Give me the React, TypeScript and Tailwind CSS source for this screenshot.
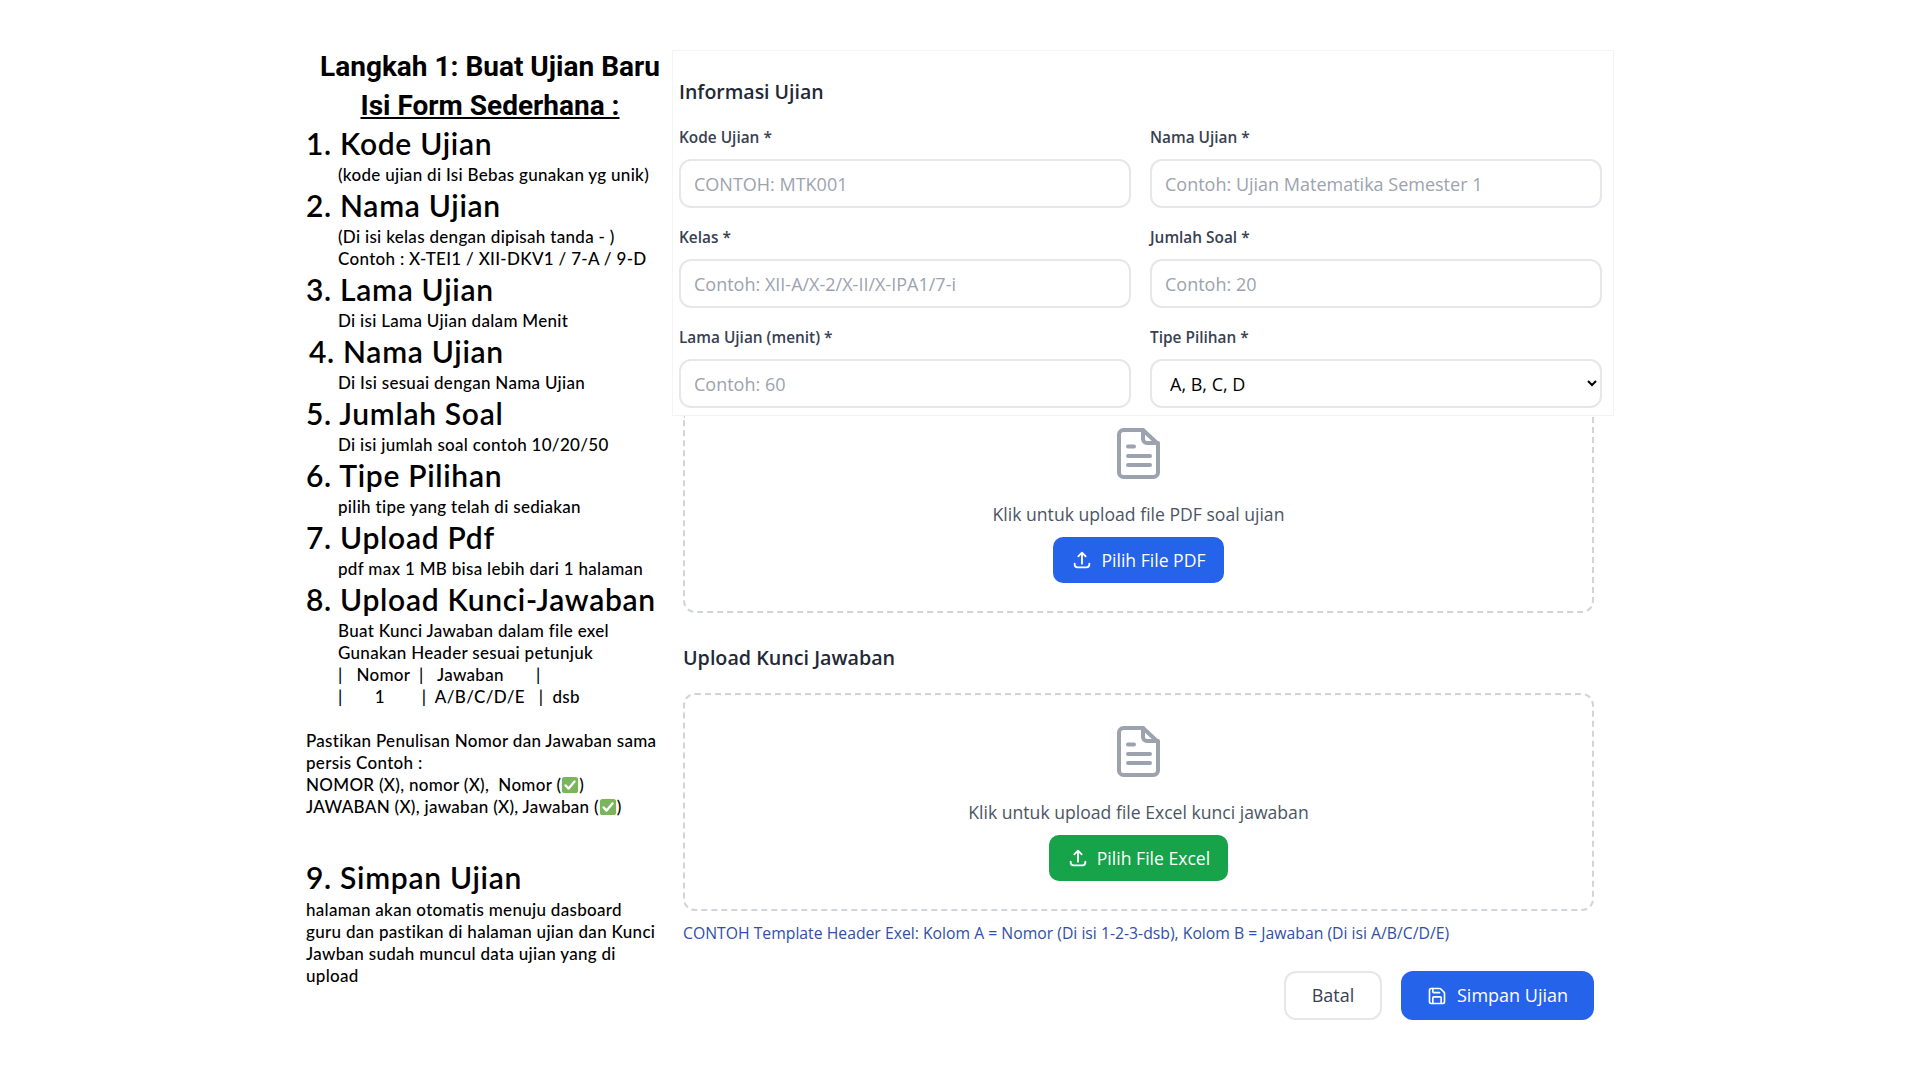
import { Save } from "lucide-react";
import { HiOutlineUpload } from "react-icons/hi";

function Check() {
  return (
    <svg viewBox="0 0 20 20" className="inline-block w-[18px] h-[18px] align-[-3px]">
      <rect x="1" y="1" width="18" height="18" rx="3" fill="#7ab55c" />
      <path d="M5 10.5l3.5 3.5L15 6" fill="none" stroke="#fff" strokeWidth="2.6" strokeLinecap="round" strokeLinejoin="round" />
    </svg>
  );
}

function DocIcon() {
  return (
    <svg viewBox="0 0 43 51" className="w-[43px] h-[51px] text-[#9ca3af]" fill="none" stroke="currentColor" strokeWidth="4" strokeLinecap="round" strokeLinejoin="round">
      <path d="M6.5 2H26L41 16V44.5a4.5 4.5 0 0 1-4.5 4.5H6.5A4.5 4.5 0 0 1 2 44.500V6.500A4.500 4.500 0 0 1 6.500 2z" />
      <path d="M26 2V11a4 4 0 0 0 4 4H41" />
      <path d="M11 18.500H17M11 28H33M11 37H33" />
    </svg>
  );
}

function Step({ title, lines, indent = "" }: { title: string; lines: string[]; indent?: string }) {
  return (
    <div className="mb-[4px]">
      <h3 className={`text-[30px] leading-[32px] font-semibold -mt-[1px] mb-[5px] whitespace-pre tracking-[0.7px] ${indent}`}>{title}</h3>
      {lines.map((line) => (
        <p key={line} className="pl-[32px] text-[17px] leading-[22px] font-medium whitespace-pre tracking-[0.3px]">
          {line}
        </p>
      ))}
    </div>
  );
}

function Field({ label, placeholder }: { label: string; placeholder: string }) {
  return (
    <div>
      <label className="block text-[15.4px] leading-[22px] font-semibold text-[#374151] mb-[10px]">{label}</label>
      <input
        placeholder={placeholder}
        className="w-full h-[49px] px-[13px] text-[18px] border-2 border-[#e5e7eb] rounded-[12px] bg-white placeholder:text-[#9ca3af]"
      />
    </div>
  );
}

function Upload({ label, button, color, className }: { label: string; button: string; color: string; className: string }) {
  return (
    <div className={`border-2 border-dashed border-[#d1d5db] flex flex-col items-center ${className}`}>
      <DocIcon />
      <p className="text-[17.6px] leading-[26px] text-[#4b5563] mt-[22px]">{label}</p>
      <button className={`mt-[10px] h-[46px] px-[18px] rounded-[10px] text-white text-[17.6px] font-medium flex items-center gap-[8px] ${color}`}>
        <HiOutlineUpload className="w-[22px] h-[22px]" />
        {button}
      </button>
    </div>
  );
}

export default function App() {
  return (
    <div className="min-h-[1080px] bg-white flex pl-[306px] pt-[50px] text-black font-['Open_Sans',sans-serif]">
      {/* left instructions */}
      <div className="w-[366px] font-['Lato',sans-serif]">
        <div className="text-center font-['Roboto',sans-serif] font-bold text-[28px] leading-[39px] -mr-[2px]">
          <h1 className="mt-[-3px]">Langkah 1: Buat Ujian Baru</h1>
          <h2 className="underline">Isi Form Sederhana :</h2>
        </div>
        <div className="mt-[3px]">
          <Step title="1. Kode Ujian" lines={["(kode ujian di Isi Bebas gunakan yg unik)"]} />
          <Step title="2. Nama Ujian" lines={["(Di isi kelas dengan dipisah tanda - )", "Contoh : X-TEI1 / XII-DKV1 / 7-A / 9-D"]} />
          <Step title="3. Lama Ujian" lines={["Di isi Lama Ujian dalam Menit"]} />
          <Step title="4. Nama Ujian" indent="pl-[3px]" lines={["Di Isi sesuai dengan Nama Ujian"]} />
          <Step title="5. Jumlah Soal" lines={["Di isi jumlah soal contoh 10/20/50"]} />
          <Step title="6. Tipe Pilihan" lines={["pilih tipe yang telah di sediakan"]} />
          <Step title="7. Upload Pdf" lines={["pdf max 1 MB bisa lebih dari 1 halaman"]} />
          <Step
            title="8. Upload Kunci-Jawaban"
            lines={["Buat Kunci Jawaban dalam file exel", "Gunakan Header sesuai petunjuk", "|   Nomor  |   Jawaban       |", "|       1        |  A/B/C/D/E   |  dsb"]}
          />
        </div>
        <div className="mt-[22px] text-[17px] leading-[22px] font-medium tracking-[0.3px]">
          <p>Pastikan Penulisan Nomor dan Jawaban sama persis Contoh :</p>
          <p className="whitespace-pre">
            NOMOR (X), nomor (X),  Nomor (<Check />)
          </p>
          <p>
            JAWABAN (X), jawaban (X), Jawaban (<Check />)
          </p>
        </div>
        <div className="mt-[43px]">
          <h3 className="text-[30px] leading-[32px] font-semibold mb-[6px] tracking-[0.7px]">9. Simpan Ujian</h3>
          <p className="text-[17px] leading-[22px] font-medium pr-[16px] tracking-[0.3px]">
            halaman akan otomatis menuju dasboard guru dan pastikan di halaman ujian dan Kunci Jawban sudah muncul data ujian yang di upload
          </p>
        </div>
      </div>

      {/* right form */}
      <div className="w-[942px]">
        <section className="h-[366px] border border-[#f3f4f6] pt-[27px] pl-[6px] pr-[11px]">
          <h2 className="text-[19.5px] leading-[28px] font-semibold text-[#1f2937] mb-[21px]">Informasi Ujian</h2>
          <div className="grid grid-cols-2 gap-x-[19px] gap-y-[19px]">
            <Field label="Kode Ujian *" placeholder="CONTOH: MTK001" />
            <Field label="Nama Ujian *" placeholder="Contoh: Ujian Matematika Semester 1" />
            <Field label="Kelas *" placeholder="Contoh: XII-A/X-2/X-II/X-IPA1/7-i" />
            <Field label="Jumlah Soal *" placeholder="Contoh: 20" />
            <Field label="Lama Ujian (menit) *" placeholder="Contoh: 60" />
            <div>
              <label className="block text-[15.4px] leading-[22px] font-semibold text-[#374151] mb-[10px]">Tipe Pilihan *</label>
              <select className="w-full h-[49px] px-[14px] text-[18px] border-2 border-[#e5e7eb] rounded-[12px] bg-white">
                <option>A, B, C, D</option>
              </select>
            </div>
          </div>
        </section>

        <div className="ml-[11px] w-[911px]">
          <Upload
            label="Klik untuk upload file PDF soal ujian"
            button="Pilih File PDF"
            color="bg-[#2563eb]"
            className="h-[197px] border-t-0 rounded-b-[12px] pt-[12px]"
          />
          <h2 className="text-[19.7px] leading-[28px] font-semibold text-[#1f2937] mt-[31px] mb-[21px]">Upload Kunci Jawaban</h2>
          <Upload
            label="Klik untuk upload file Excel kunci jawaban"
            button="Pilih File Excel"
            color="bg-[#16a34a]"
            className="h-[218px] rounded-[12px] pt-[31px]"
          />
          <p className="mt-[10px] text-[15.75px] leading-[24px] text-[#2f4fa8]">
            CONTOH Template Header Exel: Kolom A = Nomor (Di isi 1-2-3-dsb), Kolom B = Jawaban (Di isi A/B/C/D/E)
          </p>
          <div className="mt-[26px] flex justify-end gap-[19px]">
            <button className="w-[98px] h-[49px] border-2 border-[#e5e7eb] rounded-[12px] text-[18px] text-[#374151] font-medium">Batal</button>
            <button className="w-[193px] h-[49px] bg-[#2563eb] rounded-[12px] text-white text-[18px] font-medium flex items-center justify-center gap-[10px]">
              <Save className="w-[20px] h-[20px]" />
              Simpan Ujian
            </button>
          </div>
        </div>
      </div>
    </div>
  );
}
